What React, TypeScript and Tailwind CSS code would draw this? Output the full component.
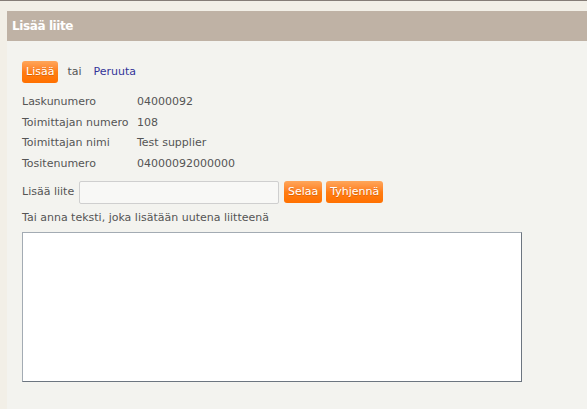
export default function App() {
  const rows = [
    ["Laskunumero", "04000092"],
    ["Toimittajan numero", "108"],
    ["Toimittajan nimi", "Test supplier"],
    ["Tositenumero", "04000092000000"],
  ];

  const btn =
    "h-[22px] px-[4px] rounded-[3px] bg-gradient-to-b from-[#ffa659] via-[#ff7d12] to-[#ff7000] text-white text-[11px] leading-[22px] [text-shadow:0_1px_0_rgba(150,60,0,0.35)]";

  return (
    <div className="w-[587px] h-[409px] overflow-hidden border-t border-[#857d77] bg-[#f2efe7] pt-[10px] pl-[7px] font-['DejaVu_Sans',Verdana,sans-serif] text-[11px] text-[#555555]">
      <div className="h-[30px] bg-[#bfb2a5] pl-[5px] flex items-center text-white font-bold text-[12px] tracking-[-0.4px]">
        Lisää liite
      </div>
      <div className="h-[400px] bg-[#f3f3ef] px-[15px] pt-[20px]">
        <div className="flex items-center">
          <button className={btn}>Lisää</button>
          <span className="ml-[9px]">tai</span>
          <a href="#" className="ml-[12px] text-[#333399]">
            Peruuta
          </a>
        </div>

        <div className="mt-[9px]">
          {rows.map(([label, value]) => (
            <div key={label} className="flex h-[20.7px] items-center">
              <span className="w-[115px]">{label}</span>
              <span>{value}</span>
            </div>
          ))}
        </div>

        <div className="mt-[6px] flex items-center h-[23px]">
          <span className="w-[57px]">Lisää liite</span>
          <input
            type="text"
            className="w-[200px] h-[23px] border border-[#cfcfcf] rounded-[2px] bg-[#f8f8f6] outline-none"
          />
          <button className={btn + " ml-[5px]"}>Selaa</button>
          <button className={btn + " ml-[4px]"}>Tyhjennä</button>
        </div>

        <div className="mt-[5px] h-[18px] leading-[18px]">
          Tai anna teksti, joka lisätään uutena liitteenä
        </div>

        <textarea className="block mt-[5px] w-[500px] h-[150px] bg-white border border-t-[#a3abb3] border-l-[#a3abb3] border-r-[#6c7580] border-b-[#6c7580] resize-none outline-none" />
      </div>
    </div>
  );
}
